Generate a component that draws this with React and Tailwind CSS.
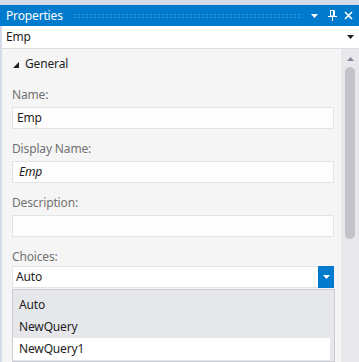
import React from "react";

function Field({ label, value, italic }) {
  return (
    <div className="flex flex-col">
      <div className="h-[16px] mt-[12px] mb-[4px] leading-[16px] text-[12px] text-[#717171]">{label}</div>
      <div
        className={`h-[22px] mr-[7px] border border-[#e4e4e4] bg-[#fdfdfd] flex items-center pl-[4px] text-[12px] text-[#1e1e1e] ${
          italic ? "italic pl-[6px]" : ""
        }`}
      >
        {value}
      </div>
    </div>
  );
}

export default function App() {
  const choices = ["Auto", "NewQuery", "NewQuery1"];
  const selected = 2;

  return (
    <div className="w-[359px] h-[362px] overflow-hidden bg-[#d6dbe9] pt-[5px] flex flex-col tracking-[-0.15px] font-['Noto_Sans','Open_Sans',sans-serif]">
      {/* title bar */}
      <div className="h-[21px] bg-[#007acc] flex items-center pl-[6px] pr-[6px] text-white">
        <span className="text-[12px] leading-none">Properties</span>
        <div className="flex-1 h-[6px] ml-[10px] mr-[8px] bg-[radial-gradient(circle,#3d98d8_0.7px,transparent_0.9px)] bg-[length:4px_3px]" />
        <svg width="7" height="4" viewBox="0 0 7 4" className="mr-[10px] mt-[1px]">
          <path d="M0 0h7L3.5 4z" fill="#fff" />
        </svg>
        <svg width="9" height="11" viewBox="0 0 9 11" className="mr-[7px]">
          <path d="M2.5 0.5h4v5.5h-4z" fill="none" stroke="#fff" strokeWidth="1" />
          <path d="M5 1v5h1V1z" fill="#fff" />
          <path d="M0 6.5h9" stroke="#fff" strokeWidth="1" />
          <path d="M4.5 7v4" stroke="#fff" strokeWidth="1" />
        </svg>
        <svg width="9" height="9" viewBox="0 0 9 9">
          <path d="M1 1l7 7M8 1L1 8" stroke="#fff" strokeWidth="1.6" />
        </svg>
      </div>

      <div className="flex-1 flex flex-col border-l-[2px] border-[#d6dbe9] min-h-0">
        {/* object selector */}
        <div className="h-[23px] bg-white border-b border-[#dcdde2] flex items-center pl-[4px] pr-[5px] text-[12px] text-[#1e1e1e]">
          <span className="flex-1">Emp</span>
          <svg width="7" height="4" viewBox="0 0 7 4">
            <path d="M0 0h7L3.5 4z" fill="#1e1e1e" />
          </svg>
        </div>

        <div className="flex-1 flex min-h-0">
          {/* grid content */}
          <div className="flex-1 bg-[#f5f5f5] pl-[10px] pt-[4px] flex flex-col min-w-0">
            <div className="h-[22px] flex items-center text-[12px] text-[#1e1e1e]">
              <svg width="6" height="6" viewBox="0 0 6 6" className="ml-[1px] mr-[6px] mt-[1px]">
                <path d="M6 0v6H0z" fill="#1e1e1e" />
              </svg>
              General
            </div>
            <Field label="Name:" value="Emp" />
            <Field label="Display Name:" value="Emp" italic />
            <Field label="Description:" value="" />

            <div className="h-[16px] mt-[12px] mb-[1px] leading-[16px] text-[12px] text-[#717171]">Choices:</div>
            <div className="h-[22px] mr-[7px] border border-[#e4e4e4] bg-white flex items-center pl-[3px] text-[12px] text-[#1e1e1e]">
              <span className="flex-1">Auto</span>
              <div className="w-[16px] h-[22px] -mr-px bg-[#007acc] flex items-center justify-center">
                <svg width="7" height="4" viewBox="0 0 7 4">
                  <path d="M0 0h7L3.5 4z" fill="#fff" />
                </svg>
              </div>
            </div>

            {/* open dropdown list */}
            <div className="mt-[1px] mr-[6px] flex-1 border border-[#cbccd2] bg-[#e6e7eb] pt-[4px] pr-[4px]">
              {choices.map((c, i) => (
                <div
                  key={c}
                  className={`h-[22px] flex items-center pl-[6px] text-[12px] text-[#1e1e1e] ${
                    i === selected ? "bg-white" : ""
                  }`}
                >
                  {c}
                </div>
              ))}
            </div>
          </div>

          {/* scrollbar */}
          <div className="w-[18px] bg-[#e8e8ec] flex flex-col items-center pt-[8px]">
            <svg width="7" height="4" viewBox="0 0 7 4">
              <path d="M3.5 0L7 4H0z" fill="#868999" />
            </svg>
            <div className="mt-[6px] w-[10px] h-[172px] rounded-[5px] bg-[#c2c3c9]" />
          </div>
        </div>
      </div>
    </div>
  );
}
